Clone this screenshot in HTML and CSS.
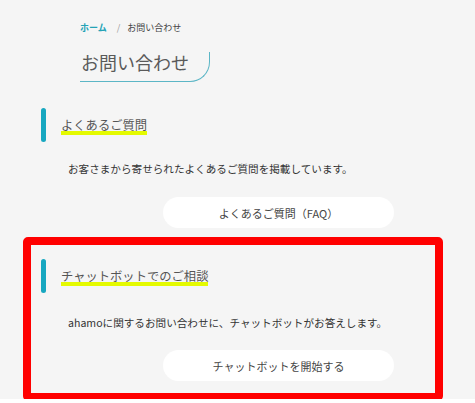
FILE: index.html
```html
<!DOCTYPE html>
<html lang="ja">
<head>
<meta charset="utf-8">
<link rel="stylesheet" href="styles.css">
</head>
<body>
<div class="page">
  <nav class="crumbs">
    <a class="crumb-home">ホーム</a>
    <span class="crumb-sep">/</span>
    <span class="crumb-cur">お問い合わせ</span>
  </nav>
  <h1 class="title">お問い合わせ</h1>

  <section class="sec sec-faq">
    <h2 class="sec-head"><span class="bar"></span><span class="mark">よくあるご質問</span></h2>
    <p class="desc">お客さまから寄せられたよくあるご質問を掲載しています。</p>
    <a class="btn">よくあるご質問（FAQ）</a>
  </section>

  <section class="sec sec-chat">
    <h2 class="sec-head"><span class="bar"></span><span class="mark">チャットボットでのご相談</span></h2>
    <p class="desc">ahamoに関するお問い合わせに、チャットボットがお答えします。</p>
    <a class="btn">チャットボットを開始する</a>
    <div class="highlight-box"></div>
  </section>
</div>
</body>
</html>
```

FILE: styles.css
```css
* { box-sizing: border-box; }
html, body {
  margin: 0;
  padding: 0;
  background: #ffffff;
  font-family: "Noto Sans CJK JP", "Noto Sans", sans-serif;
  color: #333;
}
.page {
  background: #f5f5f5;
  padding: 21px 0 18px 0;
  width: 475px;
}
.crumbs {
  display: flex;
  align-items: center;
  padding-left: 80px;
  font-size: 9px;
  line-height: 14px;
  height: 14px;
}
.crumb-home {
  color: #24a3b6;
  font-weight: 700;
}
.crumb-sep {
  color: #999;
  margin: 0 7px 0 10px;
}
.crumb-cur {
  color: #444;
}
.title {
  margin: 17px 0 0 80px;
  display: block;
  width: 130px;
  font-size: 18px;
  font-weight: 400;
  color: #5a5a5a;
  line-height: 20px;
  height: 30px;
  padding: 0 0 0 1px;
  white-space: nowrap;
  border-right: 1px solid #5cb6c6;
  border-bottom: 1px solid #5cb6c6;
  border-bottom-right-radius: 20px;
}
.sec {
  padding-left: 41px;
}
.sec-faq {
  padding-top: 26px;
  padding-bottom: 9px;
}
.sec-chat {
  position: relative;
  padding-top: 22px;
}
.sec-head {
  display: flex;
  align-items: center;
  margin: 0;
  height: 34px;
  font-weight: 400;
}
.bar {
  width: 5px;
  height: 34px;
  border-radius: 3px;
  background: #17a7c0;
  margin-right: 15px;
}
.mark {
  display: inline-block;
  font-size: 12.3px;
  line-height: 13px;
  padding-bottom: 3px;
  margin-top: 4px;
  color: #555;
  background: linear-gradient(#e4fa00, #e4fa00) left bottom / 100% 4px no-repeat;
}
.desc {
  margin: 19px 0 0 27px;
  font-size: 10.6px;
  line-height: 16px;
  color: #333;
}
.sec-chat .desc {
  margin-top: 22px;
}
.btn {
  display: flex;
  align-items: center;
  justify-content: center;
  width: 231px;
  height: 31px;
  margin: 20px 0 0 122px;
  background: #ffffff;
  border-radius: 16px;
  font-size: 11px;
  color: #444;
}
.sec-chat .btn {
  margin-top: 19px;
}
.highlight-box {
  position: absolute;
  left: 23px;
  top: 0;
  width: 420px;
  height: 164px;
  border: 8.5px solid #ff0000;
  border-radius: 5px;
  pointer-events: none;
}
```
